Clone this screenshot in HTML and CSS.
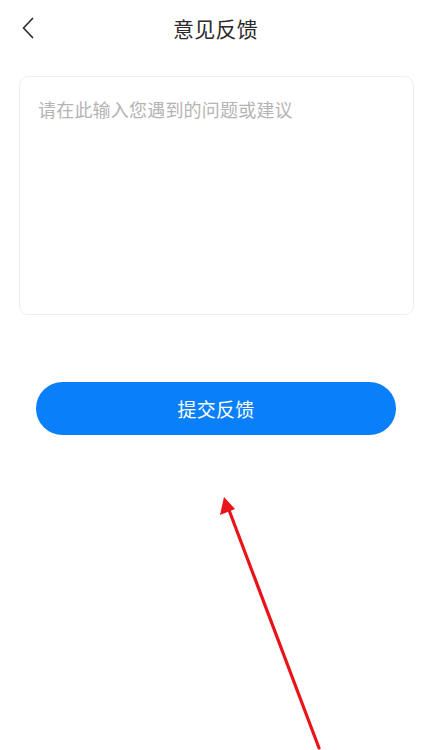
FILE: index.html
```html
<!DOCTYPE html>
<html lang="zh-CN">
<head>
<meta charset="utf-8">
<title>意见反馈</title>
<link rel="stylesheet" href="styles.css">
</head>
<body>
<div class="page">
  <header class="nav">
    <button class="back" aria-label="返回">
      <svg width="14" height="22" viewBox="0 0 14 22"><path d="M11.5 1.5 L2.5 11 L11.5 20.5" fill="none" stroke="#333" stroke-width="1.8" stroke-linecap="round" stroke-linejoin="round"/></svg>
    </button>
    <h1 class="title">意见反馈</h1>
  </header>
  <main class="content">
    <div class="feedback" role="textbox" contenteditable="true"><span class="placeholder">请在此输入您遇到的问题或建议</span></div>
    <button class="submit">提交反馈</button>
  </main>
  <svg class="arrow" width="431" height="750" viewBox="0 0 431 750">
    <line x1="319" y1="748" x2="229" y2="510" stroke="#e8141a" stroke-width="3.2" stroke-linecap="round"/>
    <polygon points="224,497 220,515 235,509" fill="#e8141a"/>
  </svg>
</div>
</body>
</html>
```
FILE: styles.css
```css
html, body {
  margin: 0;
  padding: 0;
  background: #ffffff;
}
body {
  font-family: "Noto Sans CJK SC", "Noto Sans", sans-serif;
  color: #333;
}
.page {
  position: relative;
  width: 431px;
  height: 750px;
  overflow: hidden;
}
.nav {
  height: 56px;
  display: flex;
  align-items: center;
  justify-content: center;
  position: relative;
}
.back {
  position: absolute;
  left: 18px;
  top: 17px;
  border: 0;
  background: none;
  padding: 0;
  width: 20px;
  height: 22px;
  display: flex;
  align-items: center;
  justify-content: center;
}
.title {
  margin: 0;
  font-size: 21px;
  font-weight: 400;
  color: #2b2b2b;
  letter-spacing: 0.2px;
}
.content {
  display: flex;
  flex-direction: column;
  padding: 20px 17px 0 19px;
}
.feedback {
  box-sizing: border-box;
  height: 239px;
  width: 100%;
  border: 1px solid #efefef;
  border-radius: 9px;
  padding: 20px 18px;
  font-size: 18px;
  line-height: 24px;
  color: #333;
  outline: none;
  background: #fff;
}
.placeholder {
  color: #b4b4b4;
  font-size: 18px;
  letter-spacing: 0.2px;
  white-space: nowrap;
}
.submit {
  margin: 67px 18px 0 17px;
  height: 53px;
  border: 0;
  border-radius: 27px;
  background: #0a7ffa;
  color: #fff;
  font-family: "Noto Sans CJK SC", "Noto Sans", sans-serif;
  font-size: 19px;
  letter-spacing: 0.3px;
}
.arrow {
  position: absolute;
  left: 0;
  top: 0;
  pointer-events: none;
}
```
